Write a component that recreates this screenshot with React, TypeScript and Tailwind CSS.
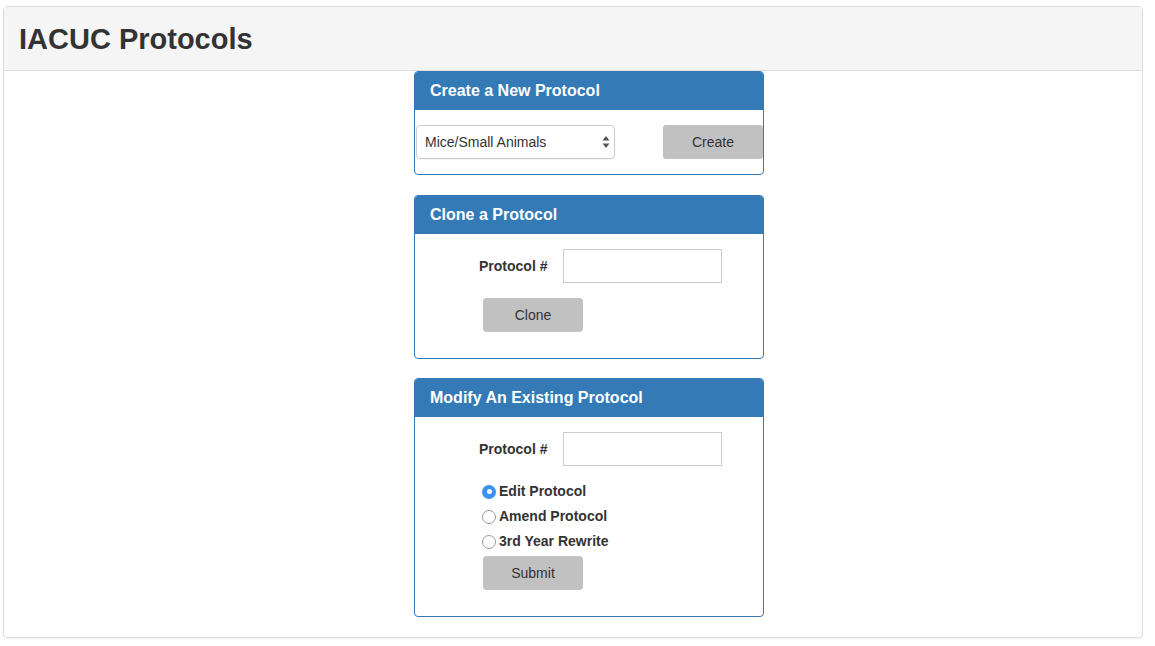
import { useState } from "react";

const FONT = { fontFamily: '"Liberation Sans", Arial, Helvetica, sans-serif' };

function Card({ title, className = "", children }: { title: string; className?: string; children: React.ReactNode }) {
  return (
    <div className={`w-[350px] border border-[#337ab7] rounded-[4px] bg-white overflow-hidden ${className}`}>
      <div className="h-[38px] bg-[#337ab7] flex items-center pl-[15px] text-white text-[16px] font-bold">
        {title}
      </div>
      {children}
    </div>
  );
}

function GrayButton({ label, className = "" }: { label: string; className?: string }) {
  return (
    <button className={`w-[100px] h-[34px] bg-[#c1c1c1] text-[#333] text-[14px] ${className}`}>
      {label}
    </button>
  );
}

function Radio({ checked, label, onClick }: { checked: boolean; label: string; onClick: () => void }) {
  return (
    <div className="h-[25px] flex items-center cursor-pointer" onClick={onClick}>
      {checked ? (
        <span className="w-[14px] h-[14px] rounded-full bg-[#3b91f7] flex items-center justify-center">
          <span className="w-[5px] h-[5px] rounded-full bg-white" />
        </span>
      ) : (
        <span className="w-[14px] h-[14px] rounded-full border border-[#9a9a9a] bg-white" />
      )}
      <span className="ml-[3px] text-[14px] font-bold text-[#333]">{label}</span>
    </div>
  );
}

export default function App() {
  const [mode, setMode] = useState("edit");

  return (
    <div style={FONT} className="bg-white min-h-[646px] pt-[6px] pl-[3px] text-[#333]">
      <div className="w-[1140px] border border-[#dddddd] rounded-[4px] shadow-[0_1px_1px_rgba(0,0,0,0.05)]">
        <div className="h-[64px] bg-[#f5f5f5] border-b border-[#dddddd] flex items-center pl-[15px]">
          <h2 className="text-[29px] font-bold text-[#333] pt-[2px]">IACUC Protocols</h2>
        </div>

        <div className="ml-[410px] flex flex-col pb-[20px]">
          <Card title="Create a New Protocol">
            <div className="flex justify-between items-center pl-[1px] pt-[15px] pb-[15px]">
              <div className="relative w-[199px] h-[34px]">
                <select
                  className="appearance-none w-full h-full border border-[#cccccc] rounded-[4px] pl-[8px] text-[14px] text-[#333] bg-white shadow-[0_1px_1px_rgba(0,0,0,0.04)]"
                  defaultValue="mice"
                >
                  <option value="mice">Mice/Small Animals</option>
                  <option value="large">Large Animals</option>
                </select>
                <svg className="absolute right-[5px] top-[11px] pointer-events-none" width="8" height="12" viewBox="0 0 8 12">
                  <path d="M4 0 L7.5 4.5 H0.5 Z" fill="#555" />
                  <path d="M4 12 L7.5 7.5 H0.5 Z" fill="#555" />
                </svg>
              </div>
              <GrayButton label="Create" className="rounded-[3px]" />
            </div>
          </Card>

          <Card title="Clone a Protocol" className="mt-[20px]">
            <div className="pl-[64px] pt-[15px] pb-[26px]">
              <div className="flex items-center">
                <label className="text-[14px] font-bold text-[#333]">Protocol #</label>
                <input className="ml-[16px] w-[159px] h-[34px] border border-[#cccccc] px-2 text-[14px]" />
              </div>
              <GrayButton label="Clone" className="mt-[15px] ml-[4px] rounded-[4px]" />
            </div>
          </Card>

          <Card title="Modify An Existing Protocol" className="mt-[19px]">
            <div className="pl-[64px] pt-[15px] pb-[26px]">
              <div className="flex items-center">
                <label className="text-[14px] font-bold text-[#333]">Protocol #</label>
                <input className="ml-[16px] w-[159px] h-[34px] border border-[#cccccc] px-2 text-[14px]" />
              </div>
              <div className="mt-[13px] pl-[3px]">
                <Radio checked={mode === "edit"} label="Edit Protocol" onClick={() => setMode("edit")} />
                <Radio checked={mode === "amend"} label="Amend Protocol" onClick={() => setMode("amend")} />
                <Radio checked={mode === "rewrite"} label="3rd Year Rewrite" onClick={() => setMode("rewrite")} />
              </div>
              <GrayButton label="Submit" className="mt-[2px] ml-[4px] rounded-[4px]" />
            </div>
          </Card>
        </div>
      </div>
    </div>
  );
}
